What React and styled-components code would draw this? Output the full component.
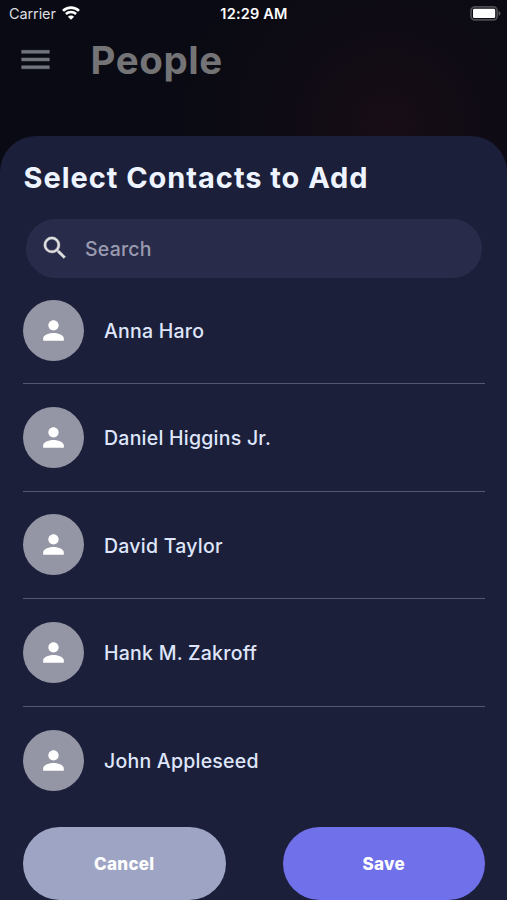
import { useState } from "react";
import styled, { createGlobalStyle } from "styled-components";
import { MdMenu, MdPerson, MdSearch } from "react-icons/md";

const contacts = [
  "Anna Haro",
  "Daniel Higgins Jr.",
  "David Taylor",
  "Hank M. Zakroff",
  "John Appleseed",
];

const WifiIcon = () => (
  <svg width="18" height="14" viewBox="0 0 18 14" fill="none">
    <path d="M1 4.9a11.4 11.4 0 0 1 16 0" stroke="#fff" strokeWidth="2.7" />
    <path d="M3.9 8a7.3 7.3 0 0 1 10.2 0" stroke="#fff" strokeWidth="2.5" />
    <path d="M9 13.8 5.9 10.7a4.4 4.4 0 0 1 6.2 0Z" fill="#fff" />
  </svg>
);

const BatteryIcon = () => (
  <svg width="31" height="15" viewBox="0 0 31 15" fill="none">
    <rect x="1" y="0.9" width="26.2" height="13" rx="3.8" stroke="#4c4c51" strokeWidth="1.8" />
    <rect x="3" y="2.7" width="22.2" height="9.4" rx="1.4" fill="#fff" />
    <path d="M28.6 5.1c1.2.4 1.9 1.3 1.9 2.3s-.7 1.9-1.9 2.3Z" fill="#58585d" />
  </svg>
);

const App = () => {
  const [search, setSearch] = useState("");

  const visible = contacts.filter((name) =>
    name.toLowerCase().includes(search.toLowerCase())
  );

  return (
    <Screen>
      <GlobalStyle />
      <StatusBar>
        <Carrier>
          Carrier
          <WifiIcon />
        </Carrier>
        <Time>12:29 AM</Time>
        <Battery>
          <BatteryIcon />
        </Battery>
      </StatusBar>
      <Header>
        <MenuIcon size={37} />
        <PageTitle>People</PageTitle>
      </Header>
      <Sheet>
        <SheetTitle>Select Contacts to Add</SheetTitle>
        <SearchBar>
          <SearchIcon size={30} />
          <SearchInput
            placeholder="Search"
            value={search}
            onChange={(e) => setSearch(e.target.value)}
          />
        </SearchBar>
        <ContactList>
          {visible.map((name) => (
            <Contact key={name}>
              <Avatar>
                <MdPerson size={31} />
              </Avatar>
              <ContactName>{name}</ContactName>
            </Contact>
          ))}
        </ContactList>
        <Actions>
          <Button $color="#9ea5c4">Cancel</Button>
          <Button $color="#6f70ea">Save</Button>
        </Actions>
      </Sheet>
    </Screen>
  );
};

export default App;

const GlobalStyle = createGlobalStyle`
  * {
    box-sizing: border-box;
  }

  body {
    margin: 0;
    background: #080a13;
    font-family: Inter, "Liberation Sans", sans-serif;
  }
`;

const Screen = styled.div`
  display: flex;
  flex-direction: column;
  width: 100%;
  height: 900px;
  overflow: hidden;
  background: radial-gradient(circle at 388px 125px, #180d17 0, #130c15 50px, #0d0b14 130px, #090a13 220px);
`;

const StatusBar = styled.div`
  display: grid;
  grid-template-columns: 1fr auto 1fr;
  align-items: center;
  height: 27px;
  padding: 0 6px 0 9px;
  color: #fff;
  font-size: 14.5px;
`;

const Carrier = styled.div`
  display: flex;
  align-items: center;
  gap: 6px;
  color: #dddde0;
  letter-spacing: -0.1px;

  svg {
    margin-top: -1px;
  }
`;

const Time = styled.div`
  margin-right: 2px;
  font-weight: 600;
  letter-spacing: 0.2px;
`;

const Battery = styled.div`
  display: flex;
  justify-content: flex-end;
`;

const Header = styled.header`
  display: flex;
  align-items: center;
  gap: 37px;
  height: 65px;
  padding-left: 16.5px;
  color: #72757b;
`;

/* the icons carry an unfilled bounding path, only the last path is the shape */
const MenuIcon = styled(MdMenu)`
  stroke: none;

  path:last-child {
    stroke: currentColor;
    stroke-width: 0.3px;
  }
`;

const PageTitle = styled.h1`
  margin: 1px 0 0;
  color: #747477;
  font-size: 38.5px;
  font-weight: 700;
  letter-spacing: 0.6px;
  line-height: 46px;
`;

const Sheet = styled.section`
  display: flex;
  flex: 1;
  flex-direction: column;
  margin-top: 43.8px;
  padding: 24.5px 22px 0 23px;
  border-radius: 36px 36px 0 0;
  background: #1c1f3a;
`;

const SheetTitle = styled.h2`
  margin: 0 0 0 0.5px;
  color: #edf4ff;
  font-size: 29px;
  font-weight: 700;
  letter-spacing: 0.96px;
  line-height: 36px;
`;

const SearchBar = styled.label`
  display: flex;
  align-items: center;
  gap: 15px;
  height: 58.5px;
  margin: 23px 3px 0;
  padding: 0 20px 0 14px;
  border-radius: 30px;
  background: #292b4a;
  color: #dedede;
`;

const SearchIcon = styled(MdSearch)`
  stroke: none;

  path:last-child {
    stroke: currentColor;
    stroke-width: 0.25px;
  }
`;

const SearchInput = styled.input`
  flex: 1;
  min-width: 0;
  padding: 2px 0 0;
  border: none;
  outline: none;
  background: none;
  color: #dfe6fa;
  font: 500 19.5px Inter, "Liberation Sans", sans-serif;
  letter-spacing: 0.2px;

  &::placeholder {
    color: #9a9bb0;
  }
`;

const ContactList = styled.ul`
  display: flex;
  flex-direction: column;
  margin: 0;
  padding: 0;
  list-style: none;
`;

const Contact = styled.li`
  display: flex;
  align-items: center;
  gap: 20px;
  height: 107.6px;

  &:first-child {
    height: 106.4px;
  }

  &:not(:last-child) {
    border-bottom: 1px solid #55586f;
  }
`;

const Avatar = styled.div`
  display: flex;
  align-items: center;
  justify-content: center;
  width: 61px;
  height: 61px;
  border-radius: 50%;
  background: #9495a5;
  color: #fff;
`;

const ContactName = styled.span`
  padding-top: 1.6px;
  color: #dfe6fb;
  font-size: 19.5px;
  font-weight: 500;
  letter-spacing: 0.24px;
`;

const Actions = styled.div`
  display: flex;
  justify-content: space-between;
  margin-top: 12.3px;
`;

const Button = styled.button`
  width: 202.5px;
  height: 73.4px;
  padding: 1px 0 0;
  border: none;
  border-radius: 37px;
  background: ${({ $color }) => $color};
  color: #fff;
  font: 800 17px Inter, "Liberation Sans", sans-serif;
  letter-spacing: 0.3px;
`;
